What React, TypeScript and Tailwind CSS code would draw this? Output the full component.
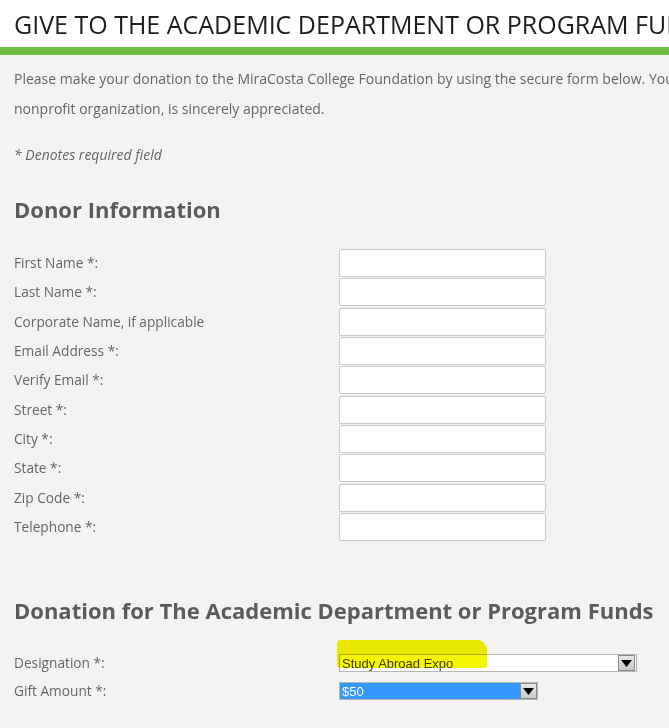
const donorFields = [
  "First Name *:",
  "Last Name *:",
  "Corporate Name, if applicable",
  "Email Address *:",
  "Verify Email *:",
  "Street *:",
  "City *:",
  "State *:",
  "Zip Code *:",
  "Telephone *:",
];

function DropArrow() {
  return (
    <span className="flex h-[16px] w-[17px] shrink-0 items-center justify-center border border-[#8a8a8a] bg-gradient-to-b from-[#e8e8e8] to-[#c9c9c9]">
      <svg width="11" height="7" viewBox="0 0 11 7">
        <path d="M0 0h11L5.5 7z" fill="#000" />
      </svg>
    </span>
  );
}

export default function App() {
  return (
    <div
      className="relative h-[728px] w-[669px] overflow-hidden bg-[#f3f3f3] text-[#666]"
      style={{ fontFamily: "'Open Sans', 'Liberation Sans', sans-serif" }}
    >
      <header className="bg-white">
        <h1 className="h-[47px] whitespace-nowrap pl-[14px] pt-[6px] text-[25px] leading-[36px] text-[#1d1d1d]">
          GIVE TO THE ACADEMIC DEPARTMENT OR PROGRAM FUNDS
        </h1>
        <div className="h-[8px] bg-[#72bb44]" />
      </header>

      <main className="w-[1000px] px-[14px]">
        <p className="mt-[9px] text-[14px] leading-[30px]">
          Please make your donation to the MiraCosta College Foundation by using the secure form below. Your gift, which is
          <br />
          nonprofit organization, is sincerely appreciated.
        </p>
        <p className="mt-[16px] text-[14px] italic leading-[30px]">* Denotes required field</p>

        <h2 className="mt-[24px] text-[22px] font-bold leading-[30px] text-[#5b5b5b]">Donor Information</h2>

        <div className="mt-[25px]">
          {donorFields.map((label) => (
            <div key={label} className="flex h-[29.35px] items-start">
              <label className="w-[325px] text-[13.7px] leading-[28px]">{label}</label>
              <div className="h-[28px] w-[207px] rounded-[2px] border border-[#c8c8c8] bg-white" />
            </div>
          ))}
        </div>

        <h2 className="mt-[53px] text-[22px] font-bold leading-[30px] text-[#5b5b5b]">
          Donation for The Academic Department or Program Funds
        </h2>

        <div className="mt-[24px] flex h-[28px] items-center">
          <label className="w-[325px] text-[13.7px]">Designation *:</label>
          <div
            className="flex h-[18px] w-[298px] items-center justify-between border border-[#b5b5b5] bg-white pl-[2px] pr-[1px] text-[13px] text-[#444]"
            style={{ fontFamily: "'Liberation Sans', Arial, sans-serif" }}
          >
            <span>Study Abroad Expo</span>
            <DropArrow />
          </div>
        </div>
        <div className="flex h-[28px] items-center">
          <label className="w-[325px] text-[13.7px]">Gift Amount *:</label>
          <div
            className="flex h-[18px] w-[199px] items-center justify-between border border-[#b5b5b5] bg-[#3399ff] pl-[2px] text-[13px] text-white"
            style={{ fontFamily: "'Liberation Sans', Arial, sans-serif" }}
          >
            <span>$50</span>
            <DropArrow />
          </div>
        </div>
      </main>

      {/* highlighter mark over the designation select */}
      <div className="pointer-events-none absolute left-[337px] top-[640px] h-[28px] w-[150px] rounded-[4px] rounded-tr-[10px] bg-[#f5f500] mix-blend-multiply" />
    </div>
  );
}
